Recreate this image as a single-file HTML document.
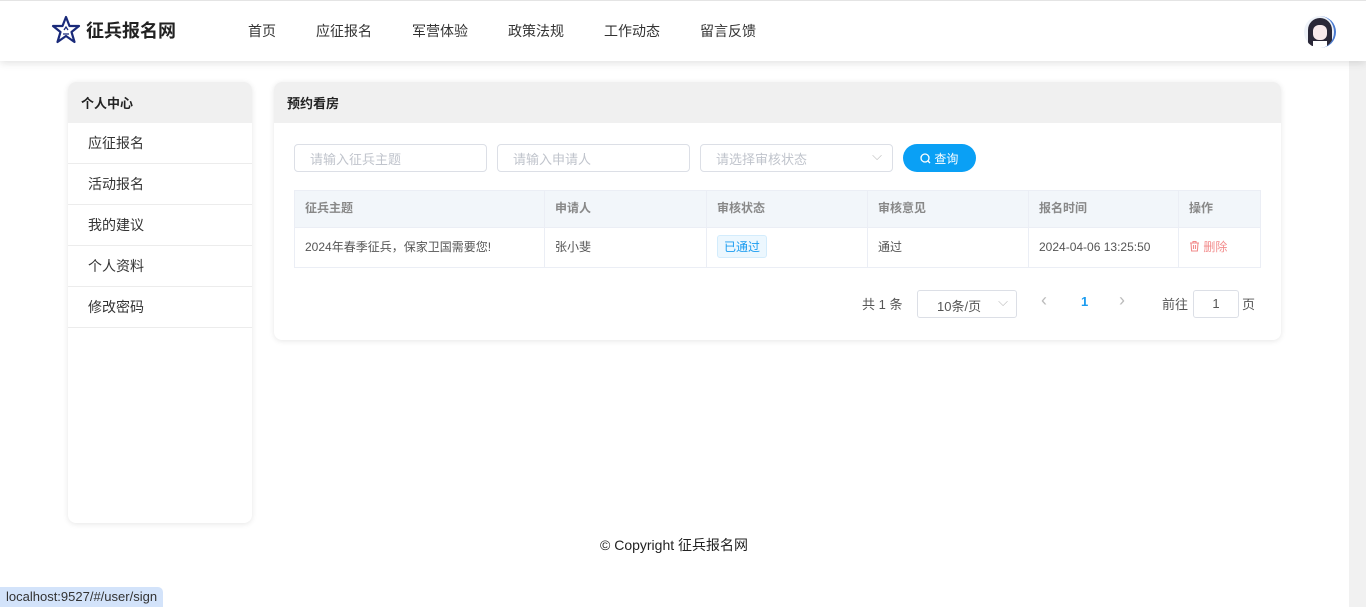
<!DOCTYPE html>
<html><head><meta charset="utf-8"><style>
*{box-sizing:border-box;margin:0;padding:0}
body{width:1366px;height:607px;overflow:hidden;background:#fff;font-family:"Liberation Sans","Noto Sans CJK SC",sans-serif;position:relative;color:#333}
.hdr{position:absolute;left:0;top:0;width:1366px;height:61px;background:#fff;border-top:1px solid #e4e4e4;box-shadow:0 2px 8px rgba(0,0,0,.12);z-index:2}
.logo{position:absolute;left:51px;top:14px;display:flex;align-items:center;font-size:18px;font-weight:bold;color:#222}
.nav{position:absolute;top:20px;font-size:14px;color:#333}
.sb{position:absolute;right:0;top:61px;width:17px;height:546px;background:#f1f1f1}
.card{position:absolute;background:#fff;border-radius:8px;box-shadow:0 1px 6px rgba(0,0,0,.1);overflow:hidden}
.ch{height:41px;background:#f0f0f0;font-size:13px;font-weight:bold;padding:11px 13px;color:#222}
.mi{height:41px;border-bottom:1px solid #ececec;font-size:14px;padding:10px 20px;color:#333}
.inp{position:absolute;top:144px;height:28px;border:1px solid #dcdfe6;border-radius:4px;font-size:13px;color:#c0c4cc;padding:4px 15px}
table{position:absolute;left:294px;top:190px;width:967px;border-collapse:collapse;font-size:12px}
td,th{border:1px solid #ebeef5;text-align:left;padding:0 10px;font-weight:normal}
th{background:#f2f6fa;color:#888;height:37px;font-weight:bold;padding-bottom:3px}
td{height:40px;color:#555;padding-bottom:2px}
</style></head><body>
<div class="hdr">
<div class="logo"><svg width="30" height="30" viewBox="0 0 30 30"><path d="M15 2 L18.5 11 L28 11 L20.5 17 L23.5 27 L15 21 L6.5 27 L9.5 17 L2 11 L11.5 11 Z" fill="none" stroke="#1a2a7a" stroke-width="2.2" stroke-linejoin="round"/><path d="M13 15 L15 12 L17 15 M12 19 H18" fill="none" stroke="#1a2a7a" stroke-width="1.3"/></svg><span style="margin-left:5px">征兵报名网</span></div>
<span class="nav" style="left:248px">首页</span><span class="nav" style="left:316px">应征报名</span><span class="nav" style="left:412px">军营体验</span><span class="nav" style="left:508px">政策法规</span><span class="nav" style="left:604px">工作动态</span><span class="nav" style="left:700px">留言反馈</span>
<div style="position:absolute;left:1304px;top:15px;width:32px;height:32px;border-radius:50%;background:#eef2f8;overflow:hidden;border-right:2px solid #4a7ad0"><div style="position:absolute;left:4px;top:2px;width:24px;height:28px;border-radius:12px 12px 4px 4px;background:#2a2838"></div><div style="position:absolute;left:9px;top:9px;width:14px;height:15px;border-radius:6px;background:#f8eaec"></div><div style="position:absolute;left:9px;top:25px;width:14px;height:7px;background:#fff"></div></div>
</div>
<div class="sb"></div>
<div class="card" style="left:68px;top:82px;width:184px;height:441px">
<div class="ch">个人中心</div>
<div class="mi">应征报名</div><div class="mi">活动报名</div><div class="mi">我的建议</div><div class="mi">个人资料</div><div class="mi">修改密码</div>
</div>
<div class="card" style="left:274px;top:82px;width:1007px;height:258px">
<div class="ch">预约看房</div>
</div>
<div class="inp" style="left:294px;width:193px">请输入征兵主题</div>
<div class="inp" style="left:497px;width:193px">请输入申请人</div>
<div class="inp" style="left:700px;width:193px">请选择审核状态<span style="position:absolute;right:10px;top:3px;color:#bbb">⌵</span></div>
<div style="position:absolute;left:903px;top:144px;width:73px;height:28px;border-radius:14px;background:#0aa0f5;color:#fff;font-size:12px;padding:6px 0 0 17px"><svg width="11" height="11" viewBox="0 0 11 11" style="vertical-align:-1px"><circle cx="5" cy="5" r="4" fill="none" stroke="#fff" stroke-width="1.3"/><path d="M8 8 L10 10" stroke="#fff" stroke-width="1.3"/></svg> 查询</div>
<table>
<tr><th style="width:250px">征兵主题</th><th style="width:162px">申请人</th><th style="width:161px">审核状态</th><th style="width:161px">审核意见</th><th style="width:150px">报名时间</th><th>操作</th></tr>
<tr><td>2024年春季征兵，保家卫国需要您!</td><td>张小斐</td><td><span style="display:inline-block;border:1px solid #d3ecfc;background:#ecf7fe;color:#1a9cf0;border-radius:3px;padding:2px 6px;font-size:12px">已通过</span></td><td>通过</td><td>2024-04-06 13:25:50</td><td style="color:#f28b8b"><svg width="11" height="12" viewBox="0 0 11 12" style="vertical-align:-1px"><path d="M1 3H10M4 3V1.5H7V3M2 3L2.6 11H8.4L9 3M4.5 5V9M6.5 5V9" fill="none" stroke="#f28b8b" stroke-width="1.1"/></svg> 删除</td></tr>
</table>
<div style="position:absolute;left:862px;top:294px;font-size:13px;color:#555">共 1 条</div>
<div style="position:absolute;left:917px;top:290px;width:100px;height:28px;border:1px solid #dcdfe6;border-radius:3px;font-size:13px;color:#555;padding:5px 0 0 19px">10条/页<span style="position:absolute;right:8px;top:3px;color:#bbb">⌵</span></div>
<div style="position:absolute;left:1041px;top:290px;font-size:18px;color:#bbb">‹</div>
<div style="position:absolute;left:1081px;top:294px;font-size:13px;color:#1a9cf0;font-weight:bold">1</div>
<div style="position:absolute;left:1119px;top:290px;font-size:18px;color:#bbb">›</div>
<div style="position:absolute;left:1162px;top:294px;font-size:13px;color:#555">前往</div>
<div style="position:absolute;left:1193px;top:290px;width:46px;height:28px;border:1px solid #dcdfe6;border-radius:3px;font-size:13px;color:#555;text-align:center;padding-top:5px">1</div>
<div style="position:absolute;left:1242px;top:294px;font-size:13px;color:#555">页</div>
<div style="position:absolute;left:600px;top:535px;font-size:14px;color:#222">© Copyright 征兵报名网</div>
<div style="position:absolute;left:0;top:587px;height:20px;padding:2px 6px;background:#d3e3fa;border-radius:0 5px 0 0;font-size:13px;color:#333">localhost:9527/#/user/sign</div>
</body></html>
